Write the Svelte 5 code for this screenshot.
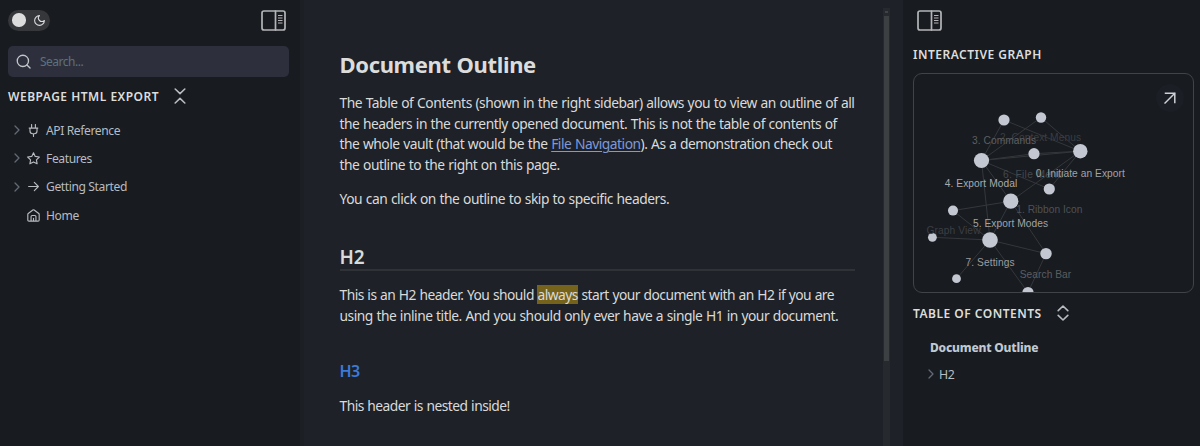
<script>
  const files = [
    { label: 'API Reference', icon: 'plug', nested: true },
    { label: 'Features', icon: 'star', nested: true },
    { label: 'Getting Started', icon: 'arrow', nested: true },
    { label: 'Home', icon: 'home', nested: false }
  ];

  const icons = {
    plug: 'M12 23v-5 M8.5 7V1 M15.5 7V1 M4 7.5h16 M18.5 8v5a5 5 0 0 1-5 5h-3a5 5 0 0 1-5-5V8',
    star: 'M12 1.5l3.2 6.6L22.8 9.2l-5.4 5.2 1.3 7.4L12 18.3l-6.7 3.5 1.3-7.4L1.2 9.2l7.6-1.1Z',
    arrow: 'M3 12h18 M13.5 4.5L21 12l-7.5 7.5',
    home: 'M22.5 20.5a2 2 0 0 1-2 2h-17a2 2 0 0 1-2-2V10a2 2 0 0 1 .8-1.6l8.5-6.5a2 2 0 0 1 2.4 0l8.5 6.5A2 2 0 0 1 22.5 10Z M7.5 22V14a2 2 0 0 1 2-2h5a2 2 0 0 1 2 2v8 M12 22v-5'
  };

  const nodes = [
    [90, 46, 5.6], [127, 43.5, 5.2], [67.5, 86.5, 7.6], [120, 79.7, 5.6],
    [166.3, 77.2, 7.2], [135.3, 115, 5.6], [96.8, 127.2, 7.6], [39, 136.6, 5],
    [18.4, 163.3, 4.4], [76, 166, 7.8], [42.5, 204.7, 4.4], [132, 179.6, 5.7],
    [114, 218.5, 5.6]
  ];
  const links = [
    [0, 2], [0, 4], [1, 2], [1, 4], [2, 3], [3, 4], [2, 4], [2, 5], [4, 5],
    [2, 6], [4, 6], [2, 9], [6, 7], [6, 9], [6, 11], [7, 9], [8, 9], [9, 10],
    [9, 11], [9, 12], [11, 12]
  ];
  const labels = [
    ['2. Context Menus', 126.5, 66.7, '#3a3d42', 81],
    ['3. Commands', 90, 70, '#5c5f64', 64],
    ['6. File Menu', 119, 103.6, '#44474c', 60],
    ['0. Initiate an Export', 166.3, 102.7, '#a0a3a8', 89],
    ['4. Export Modal', 67, 112.7, '#a7aaaf', 72.5],
    ['1. Ribbon Icon', 135.3, 139, '#4e5156', 66],
    ['5. Export Modes', 96.5, 153, '#a0a3a8', 75],
    ['Graph View', 39.5, 160, '#3b3f44', 54],
    ['7. Settings', 76, 192, '#9a9da2', 49],
    ['Search Bar', 131.5, 203.7, '#5b5e63', 51.5]
  ];
</script>

{#snippet panel()}
  <svg class="panel" viewBox="0 0 25 21">
    <rect x="1" y="1" width="23" height="19" rx="2" />
    <path d="M14.5 1v19" />
    <path class="fine" d="M17 5.5h4.5 M17 8h4.5 M17 10.5h4.5 M17 13h4.5" />
  </svg>
{/snippet}

<div class="app">
  <aside class="left">
    <div class="top">
      <div class="toggle">
        <span class="knob"></span>
        <svg viewBox="0 0 24 24"><path d="M12 3a6 6 0 0 0 9 9 9 9 0 1 1-9-9Z" /></svg>
      </div>
      {@render panel()}
    </div>
    <div class="search">
      <svg viewBox="0 0 24 24"><circle cx="11" cy="11" r="9" /><path d="M17.5 17.5L22.5 22.5" /></svg>
      <span>Search...</span>
    </div>
    <div class="heading site">
      <span>WEBPAGE HTML EXPORT</span>
      <svg viewBox="0 0 12 16"><path d="M1.2 1L6 5.6 10.8 1 M1.2 15L6 10.4 10.8 15" /></svg>
    </div>
    <nav>
      {#each files as file}
        <div class="row">
          <span class="chev">
            {#if file.nested}
              <svg viewBox="0 0 6 10"><path d="M1 1l4 4-4 4" /></svg>
            {/if}
          </span>
          <svg class="icon" viewBox="0 0 24 24"><path d={icons[file.icon]} /></svg>
          <span class="name">{file.label}</span>
        </div>
      {/each}
    </nav>
  </aside>

  <main>
    <article>
      <h1>Document Outline</h1>
      <p>
        <span>The Table of Contents (shown in the right sidebar) allows you to view an outline of all</span><br />
        <span class="snug">the headers in the currently opened document. This is not the table of contents of</span><br />
        <span class="snug">the whole vault (that would be the <a href="#files">File Navigation</a>). As a demonstration check out</span><br />
        <span>the outline to the right on this page.</span>
      </p>
      <p>You can click on the outline to skip to specific headers.</p>
      <h2>H2</h2>
      <p>
        <span class="tight">This is an H2 header. You should <mark>always</mark> start your document with an H2 if you are</span><br />
        <span class="snug">using the inline title. And you should only ever have a single H1 in your document.</span>
      </p>
      <h3>H3</h3>
      <p class="tight">This header is nested inside!</p>
    </article>
    <div class="scroll">
      <span class="up"></span>
      <span class="thumb"></span>
    </div>
  </main>

  <aside class="right">
    <div class="rtop">{@render panel()}</div>
    <div class="heading graph-title"><span>INTERACTIVE GRAPH</span></div>
    <div class="graph">
      <svg class="canvas" viewBox="0 0 279 218">
        {#each links as [a, b]}
          <line x1={nodes[a][0]} y1={nodes[a][1]} x2={nodes[b][0]} y2={nodes[b][1]} />
        {/each}
        {#each nodes as [x, y, r]}
          <circle cx={x} cy={y} {r} />
        {/each}
        {#each labels as [text, x, y, fill, width]}
          <text {x} {y} {fill} textLength={width} text-anchor="middle">{text}</text>
        {/each}
      </svg>
      <span class="expand">
        <svg viewBox="0 0 12 12"><path d="M1.5 1.2h9.3V10.5 M10.8 1.2L1 11" /></svg>
      </span>
    </div>
    <div class="heading toc-title">
      <span>TABLE OF CONTENTS</span>
      <svg viewBox="0 0 12 16"><path d="M1.2 5.6L6 1l4.8 4.6 M1.2 10.4L6 15l4.8-4.6" /></svg>
    </div>
    <div class="toc-current">Document Outline</div>
    <div class="toc-row">
      <svg viewBox="0 0 6 10"><path d="M1 1l4 4-4 4" /></svg>
      <span>H2</span>
    </div>
  </aside>
</div>

<style>
  :global(body) { background: #181b1f; }
  * { box-sizing: border-box; }
  .app {
    display: grid;
    grid-template-columns: 300px 603px 297px;
    width: 1200px;
    height: 446px;
    overflow: hidden;
    background: #181b1f;
    color: #dadada;
    font-family: "Noto Sans", "Open Sans", sans-serif;
    white-space: nowrap;
  }
  svg { display: block; flex: none; fill: none; stroke: #b8bbc0; stroke-linecap: round; stroke-linejoin: round; }

  .left { padding: 9px 11px 0 8px; }
  .top { display: flex; justify-content: space-between; height: 22px; align-items: center; padding-right: 3px; }
  .toggle { display: flex; align-items: center; width: 42px; height: 21px; border-radius: 11px; background: #35373b; padding: 0 4px; justify-content: space-between; }
  .knob { width: 13.5px; height: 13.5px; border-radius: 50%; background: #dcdcdd; }
  .toggle svg { width: 13px; height: 13px; stroke: #dcdcdd; stroke-width: 2; }
  .panel { width: 25px; height: 21px; stroke-width: 1.7; stroke: #b4b5b8; }
  .fine { stroke-width: 1.2; stroke-linecap: butt; }
  .search { display: flex; align-items: center; gap: 9px; height: 31px; margin-top: 15px; border-radius: 5px; background: #2d303c; padding-left: 8px; font-size: 12px; color: #5d717d; letter-spacing: -0.5px; }
  .search svg { width: 15px; height: 15px; stroke-width: 2.1; stroke: #c4c6ca; }

  .heading { display: flex; align-items: center; font-size: 12px; font-weight: 600; height: 20px; color: #dcdddd; }
  .heading svg { width: 12px; height: 16px; stroke-width: 1.6; margin-left: 15px; }
  .site { margin-top: 9px; letter-spacing: 0.5px; }
  nav { margin-top: 10px; }
  .row { display: flex; align-items: center; height: 28.3px; padding-left: 6px; font-size: 12.1px; letter-spacing: -0.4px; color: #b6bcc3; }
  .chev { width: 13px; }
  .chev svg, .toc-row svg { width: 6px; height: 10px; stroke: #626a76; stroke-width: 1.3; }
  .icon { width: 13px; height: 13px; stroke-width: 2.1; }
  .name { margin-left: 6px; }

  main { display: flex; justify-content: space-between; min-width: 0; background: #1e2228; box-shadow: inset 4px 0 #1c2025; }
  article { width: 555px; padding: 49px 0 0 39.5px; font-size: 13.8px; letter-spacing: -0.46px; word-spacing: 0.5px; }
  h1 { margin: 0 0 13px; font-size: 22px; line-height: 31px; font-weight: 700; letter-spacing: -0.35px; color: #dcdcdc; }
  p { margin: 0 0 13.4px; line-height: 20.7px; }
  .snug { letter-spacing: -0.48px; }
  .tight { letter-spacing: -0.52px; }
  h2 { margin: 33px 0 14.5px; height: 27.8px; line-height: 28px; font-size: 19px; font-weight: 600; letter-spacing: 0; border-bottom: 2px solid #2f3236; }
  h3 { margin: 33.5px 0 13.5px; font-size: 16px; line-height: 22px; font-weight: 600; letter-spacing: -0.6px; color: #3b7ad9; }
  a { color: #7f99d8; text-decoration: underline; text-underline-offset: 2px; }
  mark { background: #76631b; color: inherit; padding: 0; }
  .scroll { width: 20px; padding-top: 8px; display: flex; flex-direction: column; }
  .up { width: 7px; height: 8px; background: #26292e; }
  .up::before { content: ""; display: block; margin: 3px auto 0; width: 3px; height: 2px; background: #404347; }
  .thumb { width: 7px; flex: 1; border: 0 solid #26292e; border-width: 0 1px; background: linear-gradient(#3d4043 345px, #26292e 345px); }

  .right { padding: 10px 7px 0 10px; }
  .rtop { height: 21px; padding-left: 4px; }
  .graph-title { margin-top: 13px; letter-spacing: 0.5px; }
  .graph { position: relative; width: 281px; height: 220px; margin-top: 9px; border: 1px solid #404347; border-radius: 9px; overflow: hidden; }
  .canvas { width: 279px; height: 218px; }
  .canvas line { stroke: #34373b; stroke-width: 1; }
  .canvas circle { fill: #c2c7d1; stroke: none; }
  .canvas text { font-family: "Liberation Sans", Arial, sans-serif; font-size: 10.2px; stroke: none; }
  .expand { position: absolute; right: 9.5px; top: 10px; width: 28px; height: 28px; border-radius: 50%; background: #1b1e25; display: grid; place-items: center; }
  .expand svg { width: 12px; height: 12px; stroke: #cdd0d5; stroke-width: 1.5; stroke-linecap: square; stroke-linejoin: miter; }
  .toc-title { margin-top: 10px; letter-spacing: 0.5px; }
  .toc-current { margin-top: 15px; padding-left: 17px; font-size: 12px; line-height: 20px; font-weight: 800; letter-spacing: -0.2px; color: #c0c9d3; }
  .toc-row { display: flex; align-items: center; gap: 5px; padding-left: 15px; margin-top: 6px; height: 20px; font-size: 12.3px; letter-spacing: -0.3px; color: #b6bcc3; }
</style>
